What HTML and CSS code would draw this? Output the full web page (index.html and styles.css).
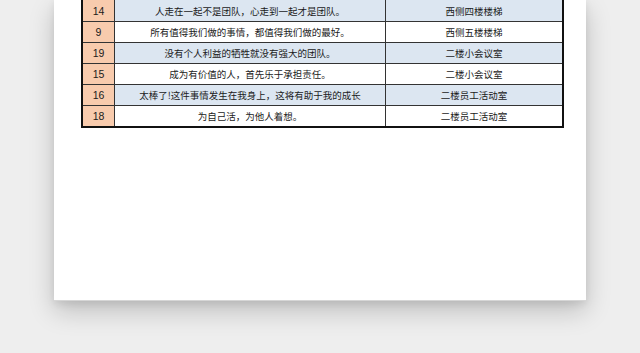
FILE: index.html
```html
<!DOCTYPE html>
<html lang="zh-CN">
<head>
<meta charset="utf-8">
<title>表格</title>
<link rel="stylesheet" href="styles.css">
</head>
<body>
<div class="page">
  <div class="sheet">
    <div class="row blue first"><div class="num">14</div><div class="txt">人走在一起不是团队，心走到一起才是团队。</div><div class="loc">西侧四楼楼梯</div></div>
    <div class="row"><div class="num">9</div><div class="txt">所有值得我们做的事情，都值得我们做的最好。</div><div class="loc">西侧五楼楼梯</div></div>
    <div class="row blue"><div class="num">19</div><div class="txt">没有个人利益的牺牲就没有强大的团队。</div><div class="loc">二楼小会议室</div></div>
    <div class="row"><div class="num">15</div><div class="txt">成为有价值的人，首先乐于承担责任。</div><div class="loc">二楼小会议室</div></div>
    <div class="row blue"><div class="num">16</div><div class="txt">太棒了!这件事情发生在我身上，这将有助于我的成长</div><div class="loc">二楼员工活动室</div></div>
    <div class="row last"><div class="num">18</div><div class="txt">为自己活，为他人着想。</div><div class="loc">二楼员工活动室</div></div>
  </div>
</div>
</body>
</html>
```

FILE: styles.css
```css
html, body {
  margin: 0;
  padding: 0;
  background: #eeeeee;
}
body {
  width: 640px;
  height: 353px;
  overflow: hidden;
}
.page {
  margin-left: 54px;
  width: 532px;
  height: 301px;
  box-sizing: border-box;
  background: #ffffff;
  border-bottom: 1px solid #d6d6d6;
  box-shadow: 0 10px 24px rgba(0, 0, 0, 0.2), 0 3px 8px rgba(0, 0, 0, 0.08);
}
.sheet {
  margin-left: 27px;
  width: 483px;
  box-sizing: border-box;
  border-left: 2px solid #111111;
  border-right: 2px solid #111111;
  border-bottom: 2px solid #111111;
}
.row {
  display: grid;
  grid-template-columns: 32px 271px 176px;
  height: 21px;
  box-sizing: border-box;
  border-bottom: 1px solid #333333;
  background: #ffffff;
  color: #1a1a1a;
}
.row.first {
  height: 22px;
}
.row.last {
  height: 20px;
  border-bottom: none;
}
.row.blue {
  background: #dce6f1;
}
.num, .txt, .loc {
  display: flex;
  align-items: center;
  justify-content: center;
  white-space: nowrap;
}
.num {
  background: #f8cbad;
  border-right: 1px solid #333333;
  font-family: "Liberation Sans", Arial, sans-serif;
  font-size: 10.5px;
}
.txt {
  border-right: 1px solid #333333;
}
.txt, .loc {
  font-family: "Noto Sans CJK SC", "Noto Sans", sans-serif;
  font-size: 9.5px;
}
```
